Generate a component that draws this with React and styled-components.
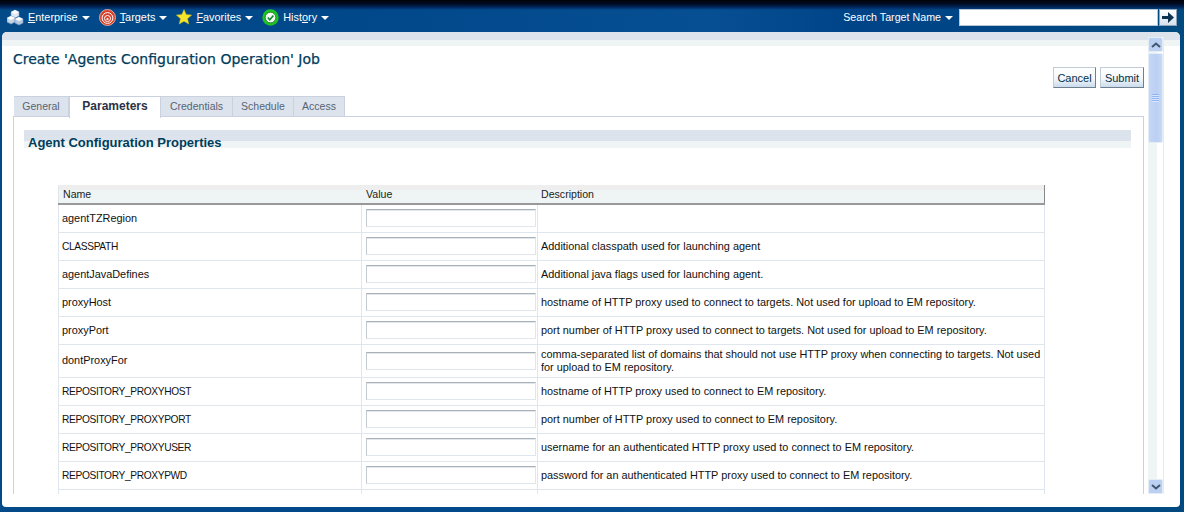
import React from 'react';
import styled, { createGlobalStyle } from 'styled-components';

const GlobalStyle = createGlobalStyle`
  html, body {
    margin: 0;
    padding: 0;
    height: 512px;
    overflow: hidden;
    background: #024a88;
    font-family: "DejaVu Sans", "Liberation Sans", sans-serif;
  }
  * { box-sizing: border-box; }
`;

const Page = styled.div`
  width: 1184px;
  height: 512px;
  display: flex;
  flex-direction: column;
  background: linear-gradient(90deg, #024a88 0%, #00488a 30%, #064f92 60%, #004488 72%, #004a80 100%);
`;

const TopBar = styled.header`
  height: 32px;
  flex: none;
  display: flex;
  align-items: center;
  justify-content: space-between;
  padding: 2px 7px 0 7px;
  background: linear-gradient(180deg, #000208 0, #000c24 4px, #00255a 7px, rgba(0, 70, 135, 0) 10px);
`;

const MenuList = styled.nav`
  display: flex;
  align-items: center;
`;

const MenuItem = styled.div`
  display: flex;
  align-items: center;
  color: #fff;
  font-family: "Liberation Sans", sans-serif;
  font-size: 10.9px;
  margin-right: 9px;
`;

const MenuLabel = styled.span`
  margin-left: 4px;
`;

const Caret = styled.span`
  width: 0;
  height: 0;
  margin-left: 4px;
  margin-top: 1px;
  border-left: 4px solid transparent;
  border-right: 4px solid transparent;
  border-top: 4px solid #fff;
`;

const SearchArea = styled.div`
  display: flex;
  align-items: center;
  color: #fff;
  font-family: "Liberation Sans", sans-serif;
  font-size: 10.7px;
`;

const SearchInput = styled.input`
  width: 199px;
  height: 17px;
  margin-left: 6px;
  border: 1px solid #b9c6d6;
  background: #fff;
  padding: 0;
`;

const GoButton = styled.button`
  width: 18px;
  height: 17px;
  margin-left: 1px;
  padding: 0;
  display: flex;
  align-items: center;
  justify-content: center;
  border: 1px solid #8ea3b8;
  background: linear-gradient(180deg, #fff, #d5e0ec);
`;

const Panel = styled.main`
  width: 1178px;
  height: 475px;
  flex: none;
  margin-left: 2px;
  display: flex;
  flex-direction: column;
  background: #fff;
  border-radius: 5px 5px 4px 4px;
  overflow: hidden;
`;

const PanelStrip = styled.div`
  height: 14px;
  flex: none;
  background: linear-gradient(180deg, #dde3ed 0, #dde3ed 8px, #eef5f4 8px);
`;

const PanelBody = styled.div`
  height: 462px;
  flex: none;
  display: flex;
  margin-top: -14px;
  padding-right: 16px;
`;

const Content = styled.div`
  width: 1146px;
  height: 462px;
  flex: none;
  padding: 14px 4px 0 11px;
  overflow: hidden;
`;

const TitleRow = styled.div`
  height: 21px;
`;

const Title = styled.h1`
  margin: 0;
  padding-top: 5px;
  font-family: "DejaVu Sans", sans-serif;
  font-size: 14px;
  font-weight: 400;
  color: #003d5b;
  -webkit-text-stroke: 0.25px #003d5b;
`;

const Actions = styled.div`
  display: flex;
  justify-content: flex-end;
  gap: 4px;
  height: 21px;
`;

const ActionButton = styled.button`
  width: ${(p) => p.$width}px;
  height: 21px;
  padding: 0;
  font-family: "Liberation Sans", sans-serif;
  font-size: 11px;
  color: #003049;
  border: 1px solid #c2ccd6;
  border-right-color: #6f7f8f;
  border-bottom-color: #6f7f8f;
  background: linear-gradient(180deg, #fff 0, #f4f7fa 55%, #c9dcec 100%);
`;

const Tabs = styled.div`
  display: flex;
  height: 21px;
  margin-top: 8px;
  padding-left: 1px;
`;

const Tab = styled.div`
  width: ${(p) => p.$width}px;
  height: ${(p) => (p.$active ? 22 : 21)}px;
  padding-bottom: ${(p) => (p.$active ? 3 : 2)}px;
  display: flex;
  align-items: center;
  justify-content: center;
  font-family: "Liberation Sans", sans-serif;
  font-size: ${(p) => (p.$active ? 12 : 10.5)}px;
  font-weight: ${(p) => (p.$active ? 700 : 400)};
  color: ${(p) => (p.$active ? '#2b3245' : '#566473')};
  background: ${(p) => (p.$active ? '#fff' : '#dde3ed')};
  border: 1px solid #c9d2de;
  border-width: ${(p) => (p.$active ? '1px 1px 0 1px' : '1px 1px 1px 0')};
  position: relative;
  z-index: ${(p) => (p.$active ? 1 : 0)};
`;

const TabBox = styled.section`
  height: 379px;
  margin-top: -1px;
  border: 1px solid #c9d2de;
  border-bottom: none;
  padding: 13px 12px 0 10px;
`;

const SectionHeader = styled.h2`
  margin: 0;
  height: 18px;
  padding-left: 4px;
  font-family: "Liberation Sans", sans-serif;
  font-size: 13px;
  line-height: 25px;
  font-weight: 700;
  color: #003d5b;
  background: linear-gradient(180deg, #dde3ed 0, #dde3ed 11px, #eef5f4 11px);
`;

const DataTable = styled.table`
  margin: 37px 0 0 34px;
  width: 987px;
  table-layout: fixed;
  border-collapse: collapse;
  font-family: "Liberation Sans", sans-serif;
  font-size: 10.9px;
  color: #111;
`;

const HeadCell = styled.th`
  height: 19px;
  padding: 0 4px 0 ${(p) => (p.$last ? 3 : 4)}px;
  text-align: left;
  font-weight: 400;
  font-size: 10.6px;
  color: #222;
  background: linear-gradient(180deg, #eeeeee 0, #eeeeee 5px, #eef5f4 5px);
  border-bottom: 2px solid #999;
  border-left: 1px solid ${(p) => (p.$first ? '#dfe6ee' : '#888')};
  border-right: 1px solid ${(p) => (p.$last ? '#888' : 'transparent')};
`;

const Cell = styled.td`
  height: ${(p) => p.$height}px;
  padding: 0 1px 0 3px;
  line-height: 13px;
  border: 1px solid #dfe6ee;
  border-top: none;
`;

const NameCell = styled(Cell)`
  font-size: ${(p) => (p.$caps ? 10.2 : 10.9)}px;
  letter-spacing: ${(p) => (p.$caps ? -0.35 : 0)}px;
`;

const ValueInput = styled.input`
  display: block;
  width: 170px;
  height: 18px;
  margin: 0 0 0 1px;
  padding: 0;
  border: 1px solid #dfe6ee;
  border-top-color: #a9b2bb;
  border-left-color: #c3cad1;
  box-shadow: inset 0 1px 0 #e3e7ea;
  background: #fff;
`;

const ScrollBar = styled.aside`
  width: 16px;
  height: 457px;
  margin-top: 5px;
  flex: none;
  display: flex;
  flex-direction: column;
  background: linear-gradient(90deg, #eef5f4 0, #eef5f4 9px, #fff 9px);
  border-right: 1px solid #e6e9ee;
`;

const ScrollArrow = styled.div`
  width: 15px;
  height: 15px;
  flex: none;
  display: flex;
  align-items: center;
  justify-content: center;
  background: #bcd0f3;
  border: 1px solid #e4ecf6;
  border-radius: 2px;
`;

const ScrollThumb = styled.div`
  width: 15px;
  height: 90px;
  margin: 1px 0 auto;
  flex: none;
  display: flex;
  align-items: center;
  justify-content: center;
  background: linear-gradient(90deg, #c4d6f6 0, #bcd0f3 60%, #c9d9f7 100%);
  border: 1px solid #e4ecf6;
  border-radius: 2px;
`;

const Grip = styled.div`
  width: 7px;
  height: 8px;
  background: repeating-linear-gradient(180deg, #8fb4f5 0, #8fb4f5 1px, #d9e6fb 1px, #d9e6fb 2px);
`;

const rows = [
  ['agentTZRegion', ''],
  ['CLASSPATH', 'Additional classpath used for launching agent'],
  ['agentJavaDefines', 'Additional java flags used for launching agent.'],
  ['proxyHost', 'hostname of HTTP proxy used to connect to targets. Not used for upload to EM repository.'],
  ['proxyPort', 'port number of HTTP proxy used to connect to targets. Not used for upload to EM repository.'],
  ['dontProxyFor', 'comma-separated list of domains that should not use HTTP proxy when connecting to targets. Not used for upload to EM repository.', 33],
  ['REPOSITORY_PROXYHOST', 'hostname of HTTP proxy used to connect to EM repository.'],
  ['REPOSITORY_PROXYPORT', 'port number of HTTP proxy used to connect to EM repository.'],
  ['REPOSITORY_PROXYUSER', 'username for an authenticated HTTP proxy used to connect to EM repository.'],
  ['REPOSITORY_PROXYPWD', 'password for an authenticated HTTP proxy used to connect to EM repository.'],
  ['', '']
];

const tabs = [
  ['General', 55],
  ['Parameters', 92, true],
  ['Credentials', 72],
  ['Schedule', 61],
  ['Access', 51]
];

const CubesIcon = () => (
  <svg width="17" height="17" viewBox="0 0 17 17">
    <path d="M8 1l4 2v4L8 9 4 7V3z" fill="#dfe8f4" stroke="#7f9cc0" strokeWidth=".6" />
    <path d="M4 7l4 2v4l-4 2-4-2V9z" fill="#c5d3e6" stroke="#7f9cc0" strokeWidth=".6" />
    <path d="M12 8l4 2v4l-4 2-4-2v-4z" fill="#b5c7de" stroke="#7f9cc0" strokeWidth=".6" />
    <path d="M8 1l4 2-4 2-4-2zM4 7l4 2-4 2-4-2zM12 8l4 2-4 2-4-2z" fill="#fff" />
  </svg>
);

const TargetIcon = () => (
  <svg width="17" height="17" viewBox="0 0 17 17">
    <circle cx="8.5" cy="8.5" r="8" fill="#d9402b" stroke="#f2c1b3" strokeWidth=".8" />
    <circle cx="8.5" cy="9" r="5.4" fill="none" stroke="#fff" strokeWidth="1" />
    <circle cx="8.5" cy="9.5" r="3" fill="none" stroke="#fff" strokeWidth="1" />
    <circle cx="8.5" cy="10" r="1.1" fill="#fff" />
  </svg>
);

const StarIcon = () => (
  <svg width="16" height="16" viewBox="0 0 16 16">
    <path d="M8 .6l2.2 5 5.4.5-4.1 3.6 1.3 5.4L8 12.2 3.2 15.1l1.3-5.4L.4 6.1l5.4-.5z" fill="#f7e62a" stroke="#d6b820" strokeWidth=".5" />
  </svg>
);

const HistoryIcon = () => (
  <svg width="17" height="17" viewBox="0 0 17 17">
    <circle cx="8.5" cy="8.5" r="8.2" fill="#1fc31f" />
    <circle cx="8.5" cy="8.5" r="5.3" fill="#f3faf3" stroke="#0a7a22" strokeWidth=".8" />
    <path d="M5.8 8.5l2 2.2 3.6-4.2" fill="none" stroke="#0b8a2a" strokeWidth="1.6" />
  </svg>
);

const GoIcon = () => (
  <svg width="12" height="11" viewBox="0 0 12 11">
    <path d="M0 4h6V0l6 5.5L6 11V7H0z" fill="#0d3350" />
  </svg>
);

const Chevron = ({ down }) => (
  <svg width="10" height="6" viewBox="0 0 10 6">
    <path d={down ? 'M1 1l4 3.5L9 1' : 'M1 5l4-3.5L9 5'} fill="none" stroke="#40566e" strokeWidth="2" />
  </svg>
);

const App = () => (
  <Page>
    <GlobalStyle />
    <TopBar>
      <MenuList>
        <MenuItem>
          <CubesIcon />
          <MenuLabel><u>E</u>nterprise</MenuLabel>
          <Caret />
        </MenuItem>
        <MenuItem>
          <TargetIcon />
          <MenuLabel><u>T</u>argets</MenuLabel>
          <Caret />
        </MenuItem>
        <MenuItem>
          <StarIcon />
          <MenuLabel><u>F</u>avorites</MenuLabel>
          <Caret />
        </MenuItem>
        <MenuItem>
          <HistoryIcon />
          <MenuLabel>Hist<u>o</u>ry</MenuLabel>
          <Caret />
        </MenuItem>
      </MenuList>
      <SearchArea>
        Search Target Name
        <Caret />
        <SearchInput aria-label="Search Target Name" />
        <GoButton aria-label="Go"><GoIcon /></GoButton>
      </SearchArea>
    </TopBar>
    <Panel>
      <PanelStrip />
      <PanelBody>
        <Content>
          <TitleRow>
            <Title>Create 'Agents Configuration Operation' Job</Title>
          </TitleRow>
          <Actions>
            <ActionButton $width={43}>Cancel</ActionButton>
            <ActionButton $width={44}>Submit</ActionButton>
          </Actions>
          <Tabs>
            {tabs.map(([label, width, active]) => (
              <Tab key={label} $width={width} $active={active}>{label}</Tab>
            ))}
          </Tabs>
          <TabBox>
            <SectionHeader>Agent Configuration Properties</SectionHeader>
            <DataTable>
              <colgroup>
                <col style={{ width: 303 }} />
                <col style={{ width: 176 }} />
                <col />
              </colgroup>
              <thead>
                <tr>
                  <HeadCell $first>Name</HeadCell>
                  <HeadCell>Value</HeadCell>
                  <HeadCell $last>Description</HeadCell>
                </tr>
              </thead>
              <tbody>
                {rows.map(([name, description, height], i) => (
                  <tr key={i}>
                    <NameCell $height={height || 28} $caps={/^[A-Z_]+$/.test(name)}>{name}</NameCell>
                    <Cell $height={height || 28}><ValueInput aria-label={name || 'value'} /></Cell>
                    <Cell $height={height || 28}>{description}</Cell>
                  </tr>
                ))}
              </tbody>
            </DataTable>
          </TabBox>
        </Content>
        <ScrollBar>
          <ScrollArrow><Chevron /></ScrollArrow>
          <ScrollThumb><Grip /></ScrollThumb>
          <ScrollArrow><Chevron down /></ScrollArrow>
        </ScrollBar>
      </PanelBody>
    </Panel>
  </Page>
);

export default App;
